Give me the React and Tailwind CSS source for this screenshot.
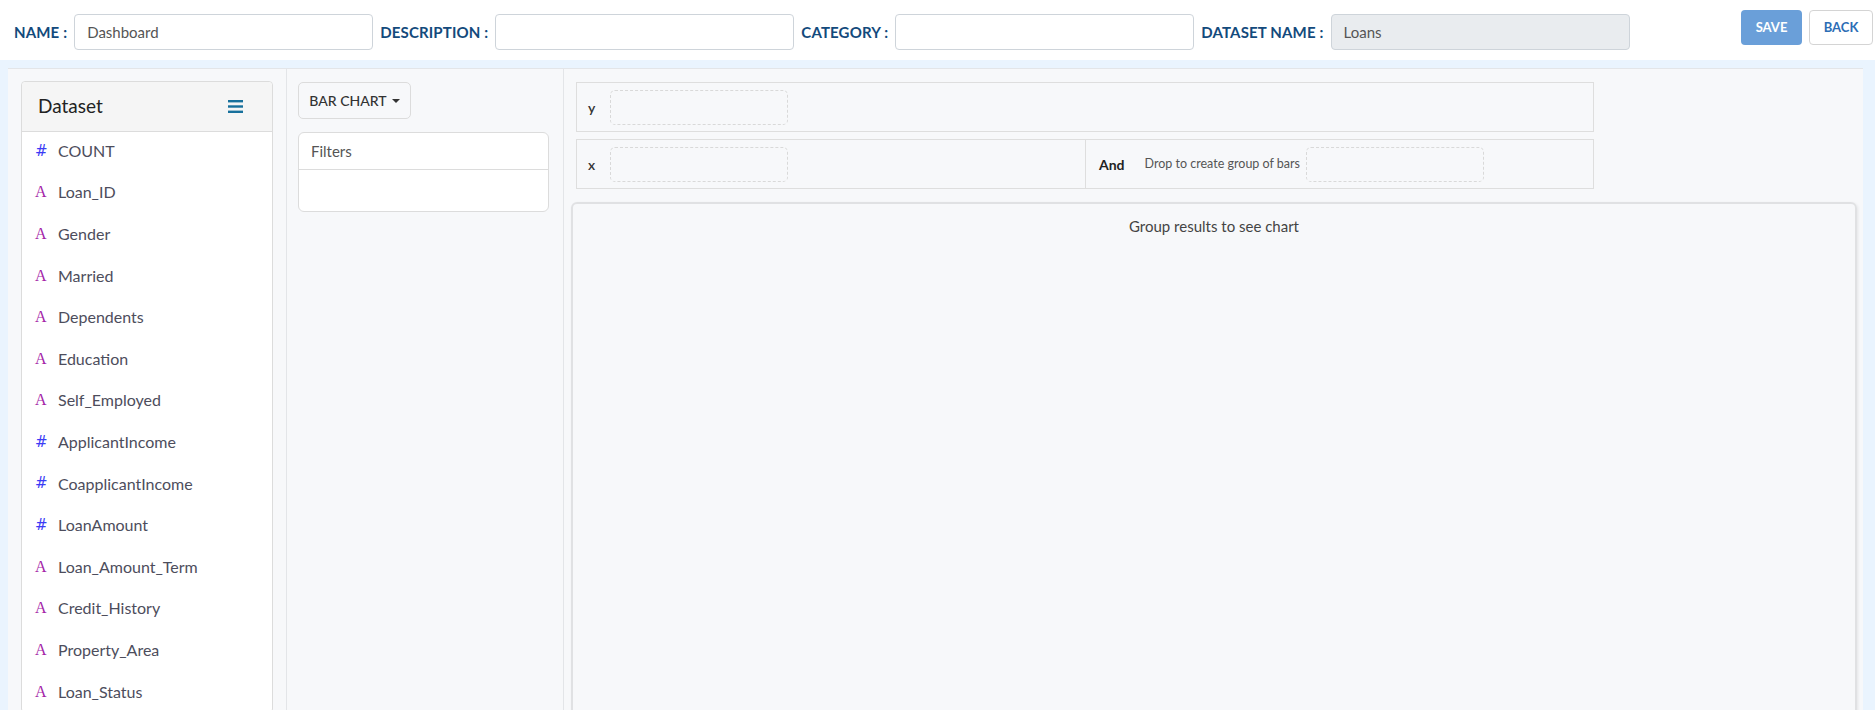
import React from 'react'

const FONT = "font-['Lato','Open_Sans',sans-serif]"

const fields = [
    { type: 'num', name: 'COUNT' },
    { type: 'str', name: 'Loan_ID' },
    { type: 'str', name: 'Gender' },
    { type: 'str', name: 'Married' },
    { type: 'str', name: 'Dependents' },
    { type: 'str', name: 'Education' },
    { type: 'str', name: 'Self_Employed' },
    { type: 'num', name: 'ApplicantIncome' },
    { type: 'num', name: 'CoapplicantIncome' },
    { type: 'num', name: 'LoanAmount' },
    { type: 'str', name: 'Loan_Amount_Term' },
    { type: 'str', name: 'Credit_History' },
    { type: 'str', name: 'Property_Area' },
    { type: 'str', name: 'Loan_Status' },
];

const Label = ({ children }) => (
    <span className="text-[15px] font-bold text-[#134a7c] tracking-[0.15px] whitespace-nowrap">{children}</span>
);

const TextInput = ({ value, disabled }) => (
    <input
        readOnly
        value={value || ''}
        className={`w-[299px] h-[36px] rounded-[4px] border border-[#ced4da] px-[12px] text-[15px] text-[#555] outline-none ${disabled ? 'bg-[#e9ecef]' : 'bg-white'}`}
    />
);

const Hamburger = () => (
    <svg width="15" height="13" viewBox="0 0 15 13">
        <rect x="0" y="0" width="15" height="2.4" fill="#17709c" />
        <rect x="0" y="5.3" width="15" height="2.4" fill="#17709c" />
        <rect x="0" y="10.6" width="15" height="2.4" fill="#17709c" />
    </svg>
);

const DropBox = () => (
    <div className="w-[178px] h-[35px] rounded-[5px] border border-dashed border-[#d9d9d9]" />
);

const App = () => {
    return (
        <div className={`h-[710px] overflow-hidden bg-[#eaf4fe] ${FONT}`}>
            {/* top bar */}
            <div className="h-[60px] bg-white flex items-start pl-[14px] pr-[2px]">
                <div className="flex items-center h-[64px] gap-[7px]">
                    <Label>NAME :</Label>
                    <TextInput value="Dashboard" />
                    <Label>DESCRIPTION :</Label>
                    <TextInput />
                    <Label>CATEGORY :</Label>
                    <TextInput />
                    <Label>DATASET NAME :</Label>
                    <TextInput value="Loans" disabled />
                </div>
                <div className="ml-auto mt-[10px] flex gap-[7px]">
                    <button className="w-[61px] h-[35px] rounded-[4px] bg-[#6a9fd9] text-white text-[13px] font-bold">SAVE</button>
                    <button className="w-[64px] h-[35px] rounded-[4px] bg-white border border-[#d4d4d4] text-[#2d6db5] text-[13px] font-bold">BACK</button>
                </div>
            </div>

            {/* body */}
            <div className="pl-[8px] pr-[12px] pt-[8px]">
                <div className="h-[642px] bg-[#f7f8fa] border-t border-[#e3e5e8] flex overflow-hidden">
                    {/* dataset column */}
                    <div className="w-[279px] shrink-0 border-r border-[#e3e5e8] pl-[13px] pt-[12px]">
                        <div className="w-[252px] rounded-[4px] border border-[#dcdcdc] bg-white">
                            <div className="h-[50px] bg-[#f5f5f5] border-b border-[#dcdcdc] rounded-t-[4px] flex items-center justify-between pl-[16px] pr-[29px]">
                                <span className="text-[19px] text-[#222]">Dataset</span>
                                <Hamburger />
                            </div>
                            <div className="-mt-[2px]">
                                {fields.map((f) => (
                                    <div key={f.name} className="h-[41.6px] flex items-center pl-[13px]">
                                        {f.type === 'num' ? (
                                            <span className="w-[23px] text-[15px] text-[#3b3bf5] font-['DejaVu_Sans',sans-serif]">#</span>
                                        ) : (
                                            <span className="w-[23px] text-[16px] text-[#a41fa8] font-['Liberation_Serif',serif]">A</span>
                                        )}
                                        <span className="text-[16px] text-[#4d4d5c]">{f.name}</span>
                                    </div>
                                ))}
                            </div>
                        </div>
                    </div>

                    {/* chart type / filters column */}
                    <div className="w-[277px] shrink-0 border-r border-[#e3e5e8] pl-[11px] pt-[13px]">
                        <button className="w-[113px] h-[37px] rounded-[5px] border border-[#dcdcdc] bg-[#f7f8fa] flex items-center justify-center gap-[5px] text-[14px] text-[#333] font-medium">
                            BAR CHART
                            <span className="w-0 h-0 border-l-[4px] border-r-[4px] border-t-[4px] border-l-transparent border-r-transparent border-t-[#333]" />
                        </button>
                        <div className="mt-[13px] w-[251px] h-[80px] rounded-[6px] border border-[#dcdcdc] bg-white">
                            <div className="h-[37px] border-b border-[#dcdcdc] flex items-center pl-[12px] text-[15px] text-[#555]">
                                Filters
                            </div>
                        </div>
                    </div>

                    {/* chart column */}
                    <div className="flex-1 pl-[12px] pt-[13px] pr-[6px]">
                        <div className="w-[1018px] flex flex-col gap-[7px]">
                            <div className="h-[50px] border border-[#dedede] flex items-center pl-[11px]">
                                <span className="w-[22px] text-[14px] font-semibold text-[#333]">y</span>
                                <DropBox />
                            </div>
                            <div className="h-[50px] border border-[#dedede] flex">
                                <div className="w-[509px] border-r border-[#dedede] flex items-center pl-[11px]">
                                    <span className="w-[22px] text-[14px] font-semibold text-[#333]">x</span>
                                    <DropBox />
                                </div>
                                <div className="flex-1 flex items-center pl-[13px]">
                                    <span className="text-[14px] font-bold text-[#222]">And</span>
                                    <span className="ml-[20px] mr-[6px] text-[12.5px] text-[#555]">Drop to create group of bars</span>
                                    <DropBox />
                                </div>
                            </div>
                        </div>
                        <div className="mt-[13px] -ml-[5px] h-[560px] rounded-[6px] border-2 border-[#e0e1e3] shadow-[1px_1px_3px_rgba(0,0,0,0.08)] text-center pt-[11px] text-[15px] text-[#444]">
                            Group results to see chart
                        </div>
                    </div>
                </div>
            </div>
        </div>
    );
}

export default App
